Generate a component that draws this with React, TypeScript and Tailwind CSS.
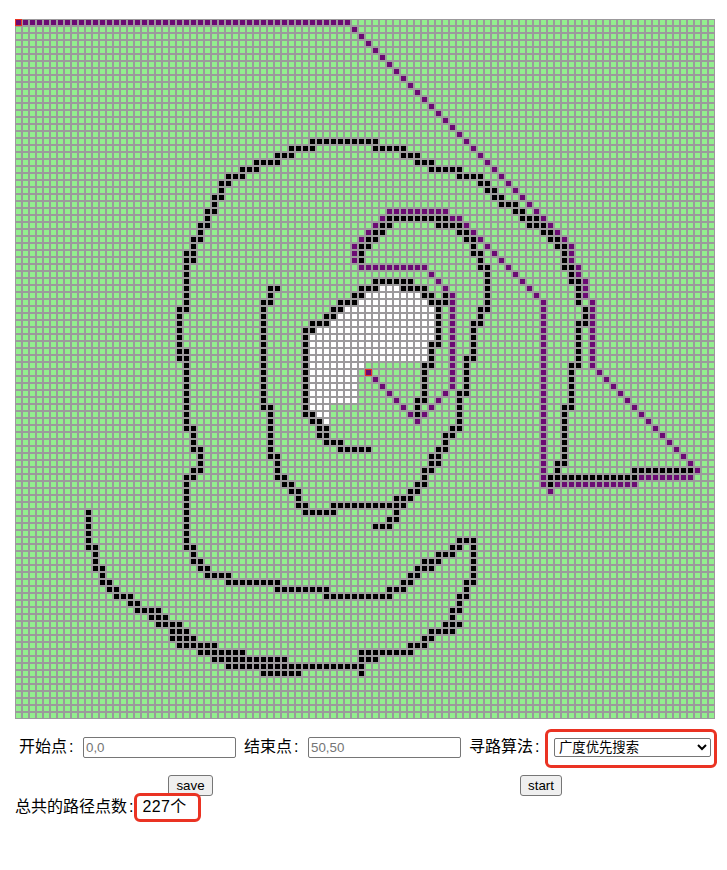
const SIZE = 100;

// black wall cells, row -> columns ("a-b" is a run)
const walls: Record<number, string> = {
  17: '42-51', 18: '39-42 51-55', 19: '37-39 55-57', 20: '34-37 57-59', 21: '32-34 59-63',
  22: '30-32 63-66', 23: '29-30 66-67', 24: '29 67-68', 25: '28-29 68-69', 26: '28 69-71',
  27: '27-28 71-72', 28: '27 53-61 72-74', 29: '26-27 52-53 60-63 73-75', 30: '26 51-52 63-64 75-76',
  31: '25-26 50-51 64-65 76-77', 32: '25 49-50 65 77-78', 33: '24-25 49 65-66 78', 34: '24-25 49 66 78',
  35: '24 66-67 78-79', 36: '24 67 79', 37: '24 51-56 67 79-80', 38: '24 36-37 49-51 55-58 67 80',
  39: '24 36 48-49 58-59 61 67 80', 40: '24 35-36 46-48 59-61 67 80', 41: '23-24 35 45-46 60 66-67 81',
  42: '23 35 44-45 60 66 81', 43: '23 35 42-44 60 65-66 80-81', 44: '23 35 41-42 60 65 80',
  45: '23 35 41 60 65 80', 46: '23 35 41 59-60 65 80', 47: '23-24 35 41 59 65 80',
  48: '23-24 35 41 59 64-65 80', 49: '24 35 41 58-59 64 79-80', 50: '24 35 41 58 64 79',
  51: '24 35 41 58 64 79', 52: '24 35 41 58 64 79', 53: '24 35 41 58 63-64 79',
  54: '24 35 41 57-58 63 79', 55: '24 35-36 41 57 63 78-79', 56: '24 36 41-42 57 63 78',
  57: '24 36 42-43 63 78', 58: '24-25 36 43-44 62-63 78', 59: '25 36 43-44 61-62 78',
  60: '25 36 44-46 61 78', 61: '25-26 36 46-50 60-61 78', 62: '26 36-37 59-60 78',
  63: '26 37 59-60 77-78', 64: '25-26 37 58-59 77 88-96', 65: '24-25 37-38 58 76-88',
  66: '24 38-39 57-58 76', 67: '24 39-40 56-57', 68: '24 40 54-56', 69: '24 40-41 45-55',
  70: '10 24 41-45 54', 71: '10 24 53-54', 72: '10 24 51-53', 73: '10 24', 74: '10 24 63-65',
  75: '10-11 24-25 62-63 65', 76: '11 25 60-62 65', 77: '11 25-26 58-60 65', 78: '11-12 26-27 57-59 65',
  79: '12 27-30 56-57 65', 80: '12-13 30-37 55-56 64-65', 81: '13-14 37-44 53-55 64',
  82: '14-16 44-53 63-64', 83: '16-17 63', 84: '17-20 62-63', 85: '19-21 62', 86: '20-23 61-63',
  87: '22-24 59-62', 88: '22-25 58-59', 89: '23-28 56-58', 90: '26-32 49-56', 91: '28-38 49-51',
  92: '30-49', 93: '35-40 49',
};

// visited cells of the search
const visited: Record<number, string> = {
  38: '52-54', 39: '50-57', 40: '49-58', 41: '47-59', 42: '46-59', 43: '45-59', 44: '43-59', 45: '42-59',
  46: '42-58', 47: '42-58', 48: '42-58', 49: '42-49', 50: '42-48', 51: '42-48', 52: '42-48', 53: '42-48',
  54: '42-48', 55: '42-44', 56: '43-44', 57: '44',
};

const path: [number, number][] = [];
const run = (r: number, from: number, to: number) => {
  for (let c = from; c <= to; c++) path.push([r, c]);
};
run(0, 0, 47);
for (let r = 1; r <= 31; r++) path.push([r, r + 47]);
[[32, 79], [33, 79], [34, 79], [35, 80], [36, 80], [37, 81], [38, 81], [39, 81]].forEach(([r, c]) => path.push([r, c]));
for (let r = 40; r <= 49; r++) path.push([r, 82]);
for (let r = 50; r <= 64; r++) path.push([r, r + 33]);
run(65, 89, 96);
run(66, 77, 88);
path.push([67, 76]);
for (let r = 40; r <= 66; r++) path.push([r, 75]);
for (let r = 29; r <= 39; r++) path.push([r, r + 35]);
run(28, 62, 63);
run(27, 53, 61);
[[28, 52], [29, 51], [30, 50], [31, 49], [32, 48], [33, 48], [34, 48]].forEach(([r, c]) => path.push([r, c]));
run(35, 49, 58);
[[36, 59], [37, 60], [38, 61]].forEach(([r, c]) => path.push([r, c]));
for (let r = 39; r <= 52; r++) path.push([r, 62]);
[[53, 61], [54, 60], [55, 59], [56, 58], [57, 57], [56, 56], [55, 55], [54, 54], [53, 53], [52, 52], [51, 51], [50, 50]].forEach(([r, c]) => path.push([r, c]));

function expand(src: Record<number, string>) {
  const set = new Set<string>();
  Object.entries(src).forEach(([r, cols]) => {
    cols.split(' ').forEach((part) => {
      const [a, b] = part.split('-').map(Number);
      for (let c = a; c <= (b ?? a); c++) set.add(`${r},${c}`);
    });
  });
  return set;
}

const wallSet = expand(walls);
const visitedSet = expand(visited);
const pathSet = new Set(path.map(([r, c]) => `${r},${c}`));
const endpoints = new Set(['0,0', '50,50']);

function cellClass(key: string) {
  if (endpoints.has(key)) return 'border border-[#ea3323] bg-[#6b0b73]';
  if (pathSet.has(key)) return 'border border-[#9c999c] bg-[#6b0b73]';
  if (wallSet.has(key)) return 'border border-[#9c999c] bg-black';
  if (visitedSet.has(key)) return 'border border-[#9c999c] bg-white';
  return 'border border-[#9c999c] bg-[#93ee8e]';
}

const cells: string[] = [];
for (let r = 0; r < SIZE; r++) for (let c = 0; c < SIZE; c++) cells.push(`${r},${c}`);

const font = { fontFamily: '"Liberation Sans", "Noto Sans CJK SC", sans-serif' };

export default function App() {
  return (
    <div className="bg-white min-h-screen pt-[19px] pl-[15px] text-black text-base relative" style={font}>
      <div className="grid w-[700px] h-[700px] grid-cols-[repeat(100,7px)] grid-rows-[repeat(100,7px)]">
        {cells.map((key) => (
          <div key={key} className={`w-[7px] h-[7px] ${cellClass(key)}`} />
        ))}
      </div>

      <div className="flex items-center mt-[18px] pl-1 h-[21px]">
        <label className="whitespace-nowrap w-[64px] pb-[2px]">
          开始点<span className="ml-[2px]">:</span>
        </label>
        <input
          placeholder="0,0"
          className="w-[153px] h-[21px] border border-[#767676] rounded-[2px] px-[2px] text-[13.33px] placeholder:text-[#757575]"
        />
        <label className="whitespace-nowrap w-[64px] ml-[8px] pb-[2px]">
          结束点<span className="ml-[2px]">:</span>
        </label>
        <input
          placeholder="50,50"
          className="w-[153px] h-[21px] border border-[#767676] rounded-[2px] px-[2px] text-[13.33px] placeholder:text-[#757575]"
        />
        <label className="whitespace-nowrap ml-[8px] w-[85px] pb-[2px]">
          寻路算法<span className="ml-[2px]">:</span>
        </label>
        <select className="w-[157px] h-[19px] border border-[#767676] rounded-[2px] text-[13.33px] bg-white">
          <option>广度优先搜索</option>
        </select>
      </div>

      <div className="flex mt-[17px] h-[21px]">
        <button className="ml-[153px] w-[45px] h-[21px] bg-[#efefef] border border-[#767676] rounded-[3px] text-[13.33px] leading-none">
          save
        </button>
        <button className="ml-[307px] w-[42px] h-[21px] bg-[#efefef] border border-[#767676] rounded-[3px] text-[13.33px] leading-none">
          start
        </button>
      </div>

      <div className="flex items-center h-[22px]">
        <span>
          总共的路径点数<span className="ml-[2px]">:</span>
        </span>
        <span className="ml-[9px] tracking-[0.4px]">227个</span>
      </div>

      <div className="absolute left-[545px] top-[729px] w-[172px] h-[39px] border-[3px] border-[#ea3323] rounded-[6px] pointer-events-none" />
      <div className="absolute left-[134px] top-[793px] w-[67px] h-[29px] border-[3px] border-[#ea3323] rounded-[6px] pointer-events-none" />
    </div>
  );
}
